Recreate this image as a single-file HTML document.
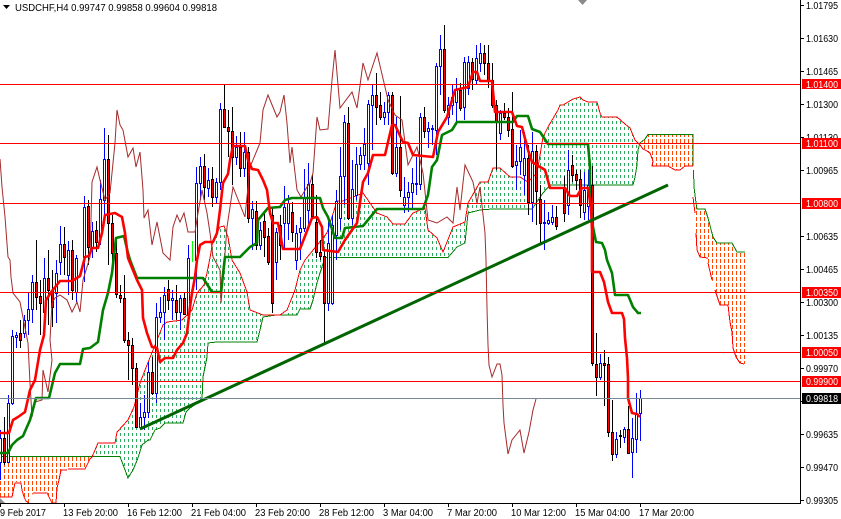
<!DOCTYPE html>
<html><head><meta charset="utf-8"><style>
html,body{margin:0;padding:0;background:#fff}
body{width:841px;height:519px;overflow:hidden;position:relative}
svg{display:block;position:absolute;left:0;top:0}
text{font-family:"Liberation Sans",sans-serif;font-size:10px;fill:#000}
</style></head><body>
<svg width="841" height="519" viewBox="0 0 841 519" xmlns="http://www.w3.org/2000/svg">
<defs>
<pattern id="g" width="4" height="6" patternUnits="userSpaceOnUse"><rect x="0" y="1" width="1" height="3" fill="#2eaa63"/></pattern>
<pattern id="o" width="4" height="6" patternUnits="userSpaceOnUse"><rect x="0" y="1" width="1" height="4" fill="#ff4500"/></pattern>
</defs>
<g>
<path fill="url(#o)" d="M0 457H92L90 459 85 469H62L59 480 57 488 56 503H52L48 495 47 493H33L29 503 26 501 24 497 22 490 21 482H15L14 483 13 492 12 497H0Z"/>
<path fill="url(#g)" d="M92 457 98 443H115L117 432 128 420 134 407 140 383 147 365 157 340 163 325 167 322 182 320 187 315 192 310 197 293 204 285 207 273 210 258 213 240 220 227 224 226 228 237 232 260 240 273 247 292 250 310 263 315H287L295 290 300 270 305 260 327 233 337 201H343L363 193 377 213 387 217 393 224H405L413 213 425 208 428 230 437 238 443 252 453 227 465 222 468 203 480 182H488L493 168H500L510 177H520L528 182 537 173 543 137 548 127 558 110 560 105H563L573 99 580 97 583 100 588 102H597L600 113 602 117H617L625 124 630 128 635 140 640 143 638 150 637 165 635 177 633 185H560L550 185 543 193 532 209H492L480 210 468 213 465 243 457 247 448 256H325L322 267 320 273 317 283 313 300 310 309H300L297 315H263L260 330 257 342H208L207 357 203 377 202 400 190 408 186 412 183 423H165L160 428 155 430 150 440 142 445 138 458 133 470 128 478 120 457Z"/>
<path fill="url(#o)" d="M640 143 648 134H693V166L694 187 696 203 697 209H705L708 218 713 237 717 243H732L737 252H745V364L740 363 736 357 733 348 732 332 730 322 728 307H720L715 290 712 280 708 263V258H700L697 250 696 233 695 213 693 197 693 166H685L680 170H675L668 166H652L650 153 647 151 643 149Z"/>
</g>
<!-- cloud edge lines -->
<g fill="none" stroke-width="1" shape-rendering="crispEdges">
<path stroke="#008000" d="M0 456.5H92M92 456.5H120L128 478 133 470 138 458 142 445 148 440H150L155 430 160 428 165 423H183L186 412 190 408 202 400 203 377 207 357 208 343 217 342H257L260 330 263 317 276 315H297L300 309H310L313 300 317 283 320 273 322 267 325 257.5H448L457 247 465 243 468 213 480 210 492 209H532L543 193 550 185H617M617 185H633L635 177 637 165 638 150 640 143 645 139 648 134.5H693V166M693.5 170 694 187 696 203 697 209H705L708 218 713 237 717 243H732L737 252H745"/>
<path stroke="#f00" d="M0 497H12L13 492 15 483H21L22 490 24 497 26 501 29 503M33 493H47L48 495 52 503H56L57 488 59 480 61 470H67M68 469H85L90 459 92 457 98 443H115L117 432 128 420 134 407 140 383 147 365 157 340 163 325 167 322 182 320 187 315 192 310 197 293 204 285 207 273 210 258 213 240 220 227 224 226 228 237 232 260 240 273 247 292 250 310 263 315H280L287 310 295 290 300 270 305 260 327 233 337 201H343L363 193 377 213 387 217 393 224H405L413 213 425 208 428 230 437 238 443 252 453 227 465 222 468 203 480 182H488L493 168H500L510 177H520L528 182 537 173 543 137 548 127 558 110 560 105H563L573 99 580 97 583 100 588 102H597L600 113 602 117H617L625 124 630 128 635 140 640 145 643 149 647 151 650 153 653 161 652 166H668L675 170H680L685 166H693M693 197 695 213M696 233 697 250 700 257 708 258M708 263 712 280M715 290 720 305H728L730 322 732 332 733 348 736 357 740 363 744 364"/>
</g>
<!-- wicks -->
<g fill="none" shape-rendering="crispEdges">
<path stroke="#0000ff" d="M.5 430V480M8.5 395V463M12.5 330V405M16.5 332V348M24.5 315V338M28.5 293V335M32.5 275V323M44.5 258V325M56.5 260V323M60.5 226V275M68.5 241V295M76.5 255V302M84.5 196V282M92.5 222V258M100.5 180V245M104.5 128V215M140.5 403V428M144.5 395V430M148.5 362V418M156.5 303V403M160.5 297V323M164.5 287V340M172.5 290V320M180.5 295V330M188.5 245V318M196.5 167V290M200.5 157V200M208.5 168V197M216.5 178V203M220.5 103V190M236.5 136V165M244.5 132V177M252.5 201V250M260.5 222V250M276.5 228V280M284.5 186V250M288.5 195V240M296.5 225V270M300.5 217V260M304.5 169V232M308.5 163V225M328.5 217V311M332.5 215V305M336.5 190V260M340.5 147V230M344.5 115V205M352.5 160V225M356.5 147V200M360.5 147V170M364.5 128V170M368.5 100V185M372.5 85V150M384.5 102V125M388.5 92V125M396.5 117V177M404.5 177V213M408.5 182V212M412.5 168V210M416.5 157V195M420.5 113V190M428.5 122V148M432.5 125V145M436.5 63V155M440.5 35V95M448.5 97V125M452.5 85V115M456.5 78V122M464.5 57V120M468.5 56V95M476.5 45V85M480.5 43V72M500.5 110V140M516.5 145V190M520.5 130V175M524.5 132V195M532.5 132V222M544.5 200V250M548.5 212V225M552.5 205V225M568.5 150V215M584.5 172V220M588.5 170V220M600.5 354V380M616.5 432V458M624.5 427V443M632.5 418V478M636.5 393V453M640.5 390V441"/>
<path stroke="#000" d="M4.5 417V465M20.5 320V348M36.5 240V310M40.5 280V335M48.5 250V325M52.5 270V327M64.5 227V275M72.5 240V300M88.5 200V265M96.5 221V252M108.5 135V265M112.5 215V270M116.5 240V298M120.5 285V303M124.5 275V343M128.5 332V380M132.5 338V385M136.5 363V428M152.5 357V395M168.5 280V310M176.5 285V320M184.5 293V315M204.5 154V200M212.5 167V207M224.5 85V128M228.5 110V157M232.5 107V185M240.5 132V177M248.5 147V223M256.5 201V250M264.5 213V257M268.5 228V265M272.5 207V313M280.5 215V260M292.5 202V242M312.5 174V218M316.5 195V258M320.5 240V260M324.5 250V343M348.5 107V220M376.5 73V125M380.5 92V120M392.5 92V175M400.5 96V197M424.5 107V138M444.5 25V113M460.5 83V111M472.5 58V90M484.5 45V75M488.5 45V88M492.5 63V108M496.5 100V170M504.5 103V120M508.5 108V137M512.5 92V168M528.5 145V215M536.5 145V225M540.5 185V243M556.5 206V230M564.5 176V222M572.5 155V182M576.5 170V190M580.5 170V218M592.5 166V366M596.5 333V396M604.5 350V406M608.5 357V437M612.5 400V461M620.5 430V448M628.5 406V453"/>
<path stroke="#00ff00" d="M192.5 241V262"/>
</g>
<!-- bodies -->
<g shape-rendering="crispEdges">
<path fill="#fff" stroke="#0000ff" d="M-.5 438.5h2V462.5h-2zM7.5 403.5h2V462.5h-2zM11.5 336.5h2V403.5h-2zM15.5 335.5h2V337.5h-2zM23.5 320.5h2V333.5h-2zM27.5 309.5h2V320.5h-2zM31.5 282.5h2V309.5h-2zM43.5 278.5h2V312.5h-2zM55.5 273.5h2V293.5h-2zM59.5 244.5h2V262.5h-2zM67.5 250.5h2V275.5h-2zM75.5 258.5h2V292.5h-2zM83.5 207.5h2V257.5h-2zM91.5 231.5h2V247.5h-2zM99.5 199.5h2V237.5h-2zM103.5 159.5h2V200.5h-2zM139.5 417.5h2V427.5h-2zM143.5 412.5h2V417.5h-2zM147.5 372.5h2V412.5h-2zM155.5 317.5h2V393.5h-2zM159.5 312.5h2V317.5h-2zM163.5 295.5h2V312.5h-2zM171.5 298.5h2V300.5h-2zM179.5 298.5h2V312.5h-2zM187.5 258.5h2V315.5h-2zM195.5 183.5h2V260.5h-2zM199.5 166.5h2V183.5h-2zM207.5 180.5h2V188.5h-2zM215.5 182.5h2V197.5h-2zM219.5 109.5h2V182.5h-2zM235.5 147.5h2V157.5h-2zM243.5 152.5h2V168.5h-2zM251.5 209.5h2V218.5h-2zM259.5 230.5h2V245.5h-2zM275.5 232.5h2V262.5h-2zM283.5 207.5h2V223.5h-2zM287.5 203.5h2V223.5h-2zM295.5 233.5h2V260.5h-2zM299.5 228.5h2V232.5h-2zM303.5 198.5h2V228.5h-2zM307.5 184.5h2V210.5h-2zM327.5 243.5h2V303.5h-2zM331.5 225.5h2V303.5h-2zM335.5 201.5h2V235.5h-2zM339.5 176.5h2V218.5h-2zM343.5 122.5h2V176.5h-2zM351.5 189.5h2V218.5h-2zM355.5 164.5h2V195.5h-2zM359.5 155.5h2V164.5h-2zM363.5 144.5h2V155.5h-2zM367.5 104.5h2V163.5h-2zM371.5 95.5h2V105.5h-2zM383.5 112.5h2V117.5h-2zM387.5 95.5h2V112.5h-2zM395.5 147.5h2V173.5h-2zM403.5 197.5h2V205.5h-2zM407.5 192.5h2V197.5h-2zM411.5 183.5h2V192.5h-2zM415.5 183.5h2V184.5h-2zM419.5 117.5h2V184.5h-2zM427.5 128.5h2V131.5h-2zM431.5 128.5h2V129.5h-2zM435.5 66.5h2V130.5h-2zM439.5 49.5h2V66.5h-2zM447.5 105.5h2V117.5h-2zM451.5 97.5h2V105.5h-2zM455.5 90.5h2V102.5h-2zM463.5 62.5h2V107.5h-2zM467.5 62.5h2V88.5h-2zM475.5 58.5h2V80.5h-2zM479.5 53.5h2V63.5h-2zM499.5 113.5h2V133.5h-2zM515.5 161.5h2V165.5h-2zM519.5 147.5h2V161.5h-2zM523.5 158.5h2V175.5h-2zM531.5 151.5h2V202.5h-2zM543.5 222.5h2V223.5h-2zM547.5 220.5h2V223.5h-2zM551.5 217.5h2V222.5h-2zM567.5 170.5h2V205.5h-2zM583.5 190.5h2V212.5h-2zM587.5 185.5h2V206.5h-2zM599.5 363.5h2V377.5h-2zM615.5 439.5h2V454.5h-2zM623.5 429.5h2V437.5h-2zM631.5 438.5h2V452.5h-2zM635.5 413.5h2V439.5h-2zM639.5 398.5h2V413.5h-2z"/>
<path fill="#f00" stroke="#000" d="M3.5 438.5h2V462.5h-2zM19.5 333.5h2V340.5h-2zM35.5 282.5h2V297.5h-2zM39.5 296.5h2V303.5h-2zM47.5 278.5h2V290.5h-2zM51.5 290.5h2V307.5h-2zM63.5 244.5h2V257.5h-2zM71.5 250.5h2V290.5h-2zM87.5 206.5h2V247.5h-2zM95.5 230.5h2V242.5h-2zM107.5 159.5h2V223.5h-2zM111.5 223.5h2V253.5h-2zM115.5 253.5h2V294.5h-2zM119.5 295.5h2V298.5h-2zM123.5 298.5h2V340.5h-2zM127.5 340.5h2V345.5h-2zM131.5 345.5h2V368.5h-2zM135.5 368.5h2V427.5h-2zM151.5 372.5h2V393.5h-2zM167.5 289.5h2V300.5h-2zM175.5 300.5h2V312.5h-2zM183.5 298.5h2V314.5h-2zM203.5 166.5h2V187.5h-2zM211.5 179.5h2V197.5h-2zM223.5 109.5h2V127.5h-2zM227.5 127.5h2V131.5h-2zM231.5 131.5h2V157.5h-2zM239.5 147.5h2V168.5h-2zM247.5 152.5h2V218.5h-2zM255.5 211.5h2V245.5h-2zM263.5 221.5h2V237.5h-2zM267.5 236.5h2V262.5h-2zM271.5 215.5h2V303.5h-2zM279.5 225.5h2V245.5h-2zM291.5 212.5h2V232.5h-2zM311.5 184.5h2V216.5h-2zM315.5 222.5h2V252.5h-2zM319.5 252.5h2V256.5h-2zM323.5 256.5h2V303.5h-2zM347.5 123.5h2V218.5h-2zM375.5 95.5h2V107.5h-2zM379.5 105.5h2V117.5h-2zM391.5 95.5h2V173.5h-2zM399.5 147.5h2V190.5h-2zM423.5 117.5h2V131.5h-2zM443.5 49.5h2V110.5h-2zM459.5 90.5h2V108.5h-2zM471.5 62.5h2V79.5h-2zM483.5 53.5h2V63.5h-2zM487.5 63.5h2V80.5h-2zM491.5 80.5h2V105.5h-2zM495.5 105.5h2V121.5h-2zM503.5 113.5h2V117.5h-2zM507.5 117.5h2V130.5h-2zM511.5 129.5h2V166.5h-2zM527.5 158.5h2V202.5h-2zM535.5 151.5h2V191.5h-2zM539.5 199.5h2V223.5h-2zM555.5 217.5h2V226.5h-2zM563.5 187.5h2V213.5h-2zM571.5 165.5h2V175.5h-2zM575.5 174.5h2V180.5h-2zM579.5 179.5h2V205.5h-2zM591.5 185.5h2V363.5h-2zM595.5 364.5h2V377.5h-2zM603.5 363.5h2V365.5h-2zM607.5 364.5h2V432.5h-2zM611.5 432.5h2V454.5h-2zM619.5 435.5h2V436.5h-2zM627.5 429.5h2V453.5h-2z"/>
</g>
<!-- chikou -->
<path fill="none" stroke="#a52a2a" stroke-width="1" d="M0 159 2 187 5 217 8 257 10 260 11 277 13 293 20 302 28 343 30 383 32 417 35 402 42 400 43 370 48 392 52 360 50 340 52 303 55 298 60 295 67 300 72 312 77 302 80 312 83 280 90 257 92 182 97 167 100 180 105 200 110 193 115 143 117 110 120 125 123 130 128 157 133 148 136 167 140 152 143 190 144 218 148 210 152 245 157 222 163 253 170 260 173 227 177 215 180 222 184 213 188 232H195L198 213 202 190 207 213 210 233 213 257 220 270 221 303 223 280 227 227 233 187 245 217 250 167 260 143 263 110 268 95 277 117 280 112 284 95 287 123 290 163 292 147 297 190 301 197 307 187 310 183 313 173 317 117 320 130 328 129 332 80 335 50 340 108 352 92 357 108 363 63 368 80 377 53 385 87 388 100 395 115 402 120 408 165 417 147 423 173 428 220 437 223 447 217 453 223 457 187 460 210 465 165 473 182 477 203 480 187 485 233 486 260 487 308 488 345 489 365 492 377 497 364H500L502 375 503 405 504 423 508 454 512 440 520 430 524 453 529 432 533 410 536 399"/>
<!-- kijun -->
<path fill="none" stroke="#008000" stroke-width="2.6" stroke-linejoin="round" d="M0 453H8L12 445 17 440 23 436 30 420 36 398H49L55 373 60 364H80L83 349 90 348 98 342 103 310 108 293 112 273 116 238 124 236 128 253 130 260 137 278H203L212 292H221L225 257H240L250 247 257 243 258 220 268 208 280 207 285 200 292 198H320L323 208 328 217 335 238H342L345 228 363 226 377 209H423L428 195 432 167 437 160 442 135 452 130 457 122H513L517 116H528L532 129 540 132 548 144H588L590 167V200L593 227 596 242 602 243 605 250 607 260 612 273 615 295H628L633 307 638 313H641"/>
<!-- tenkan -->
<path fill="none" stroke="#f00" stroke-width="2.6" stroke-linejoin="round" d="M0 433H9L13 420 18 417 25 412 30 390 35 380 40 350 44 335 46 300 52 291 60 281H72L80 276 85 257 89 256 92 248H98L102 233 105 215 115 213 122 217 125 233 128 258 137 280 142 290 143 318 147 333 152 347 157 348 160 362 165 358H173L177 350 183 343 187 333 190 307 192 293 195 277 197 260 200 245 205 242H213L217 233 220 210 223 183 228 174 230 160 233 146H245L248 160 252 169 258 170 263 180 267 190 270 213 273 223H278L280 233 283 249H300L312 218 317 217 322 227 323 250 338 252 345 240 352 230 357 223 363 182 368 173 373 155H385L392 125H395L403 142 408 143 413 155 433 157 438 132 447 117 455 90 468 87 473 72H477L480 81H492L495 112H512L517 126 522 127 528 150 532 162 545 170 550 188H565L570 196H577L582 188H588L591 208 592 230V272H600L604 282 608 302 612 313H622L624 319 625 338 627 358 628 378V398L632 413 637 414 640 417"/>
<!-- trendline -->
<line x1="140" y1="429" x2="668" y2="185" stroke="#006400" stroke-width="3"/>
<!-- levels -->
<g stroke-width="1" shape-rendering="crispEdges">
<path stroke="#778899" d="M0 398.5H800"/>
<path stroke="#f00" d="M0 84.5H800M0 143.5H800M0 203.5H800M0 292.5H800M0 352.5H800M0 381.5H800"/>
</g>
<!-- markers -->
<path fill="#8a8a8a" d="M578 0H587L582.500 5Z"/>
<path fill="#8a8a8a" d="M0 498 5 503H0Z"/>
<!-- frame -->
<rect x="801" y="0" width="40" height="519" fill="#fff"/>
<rect x="0" y="504" width="841" height="15" fill="#fff"/>
<g shape-rendering="crispEdges" stroke="#000" fill="none">
<path d="M800.500 0V503.500H0"/>
<path d="M801 5.500h3M801 38.500h3M801 71.500h3M801 104.500h3M801 137.500h3M801 170.500h3M801 236.500h3M801 269.500h3M801 302.500h3M801 335.500h3M801 368.500h3M801 401.500h3M801 434.500h3M801 467.500h3M801 500.500h3"/>
<path d="M0.500 504v3M64.500 504v3M128.500 504v3M192.500 504v3M256.500 504v3M320.500 504v3M384.500 504v3M448.500 504v3M512.500 504v3M576.500 504v3M640.500 504v3"/>
</g>
<!-- title -->
<path d="M3 5H10L6.500 9Z" fill="#000"/>
<text x="15" y="11" textLength="202" lengthAdjust="spacingAndGlyphs">USDCHF,H4  0.99747 0.99858 0.99604 0.99818</text>
<!-- axis labels -->
<g>
<text x="806" y="9" textLength="32" lengthAdjust="spacingAndGlyphs">1.01795</text>
<text x="806" y="42" textLength="32" lengthAdjust="spacingAndGlyphs">1.01630</text>
<text x="806" y="75" textLength="32" lengthAdjust="spacingAndGlyphs">1.01465</text>
<text x="806" y="108" textLength="32" lengthAdjust="spacingAndGlyphs">1.01300</text>
<text x="806" y="141" textLength="32" lengthAdjust="spacingAndGlyphs">1.01130</text>
<text x="806" y="174" textLength="32" lengthAdjust="spacingAndGlyphs">1.00965</text>
<text x="806" y="240" textLength="32" lengthAdjust="spacingAndGlyphs">1.00635</text>
<text x="806" y="273" textLength="32" lengthAdjust="spacingAndGlyphs">1.00465</text>
<text x="806" y="306" textLength="32" lengthAdjust="spacingAndGlyphs">1.00300</text>
<text x="806" y="339" textLength="32" lengthAdjust="spacingAndGlyphs">1.00135</text>
<text x="806" y="372" textLength="32" lengthAdjust="spacingAndGlyphs">0.99970</text>
<text x="806" y="438" textLength="32" lengthAdjust="spacingAndGlyphs">0.99635</text>
<text x="806" y="471" textLength="32" lengthAdjust="spacingAndGlyphs">0.99470</text>
<text x="806" y="504" textLength="32" lengthAdjust="spacingAndGlyphs">0.99305</text>
</g>
<g shape-rendering="crispEdges">
<rect x="802" y="79" width="39" height="10" fill="#f00"/>
<rect x="802" y="138" width="39" height="11" fill="#f00"/>
<rect x="802" y="198" width="39" height="11" fill="#f00"/>
<rect x="802" y="287" width="39" height="11" fill="#f00"/>
<rect x="802" y="347" width="39" height="11" fill="#f00"/>
<rect x="802" y="376" width="39" height="11" fill="#f00"/>
<rect x="802" y="393" width="39" height="11" fill="#000"/>
</g>
<g>
<text x="806" y="88" textLength="32" lengthAdjust="spacingAndGlyphs" style="fill:#fff">1.01400</text>
<text x="806" y="147" textLength="32" lengthAdjust="spacingAndGlyphs" style="fill:#fff">1.01100</text>
<text x="806" y="207" textLength="32" lengthAdjust="spacingAndGlyphs" style="fill:#fff">1.00800</text>
<text x="806" y="296" textLength="32" lengthAdjust="spacingAndGlyphs" style="fill:#fff">1.00350</text>
<text x="806" y="356" textLength="32" lengthAdjust="spacingAndGlyphs" style="fill:#fff">1.00050</text>
<text x="806" y="385" textLength="32" lengthAdjust="spacingAndGlyphs" style="fill:#fff">0.99900</text>
<text x="806" y="402" textLength="32" lengthAdjust="spacingAndGlyphs" style="fill:#fff">0.99818</text>
</g>
<!-- time labels -->
<text x="0" y="516" textLength="46" lengthAdjust="spacingAndGlyphs">9 Feb 2017</text>
<text x="63" y="516" textLength="55" lengthAdjust="spacingAndGlyphs">13 Feb 20:00</text>
<text x="127" y="516" textLength="55" lengthAdjust="spacingAndGlyphs">16 Feb 12:00</text>
<text x="191" y="516" textLength="55" lengthAdjust="spacingAndGlyphs">21 Feb 04:00</text>
<text x="255" y="516" textLength="55" lengthAdjust="spacingAndGlyphs">23 Feb 20:00</text>
<text x="319" y="516" textLength="55" lengthAdjust="spacingAndGlyphs">28 Feb 12:00</text>
<text x="383" y="516" textLength="50" lengthAdjust="spacingAndGlyphs">3 Mar 04:00</text>
<text x="447" y="516" textLength="50" lengthAdjust="spacingAndGlyphs">7 Mar 20:00</text>
<text x="511" y="516" textLength="55" lengthAdjust="spacingAndGlyphs">10 Mar 12:00</text>
<text x="575" y="516" textLength="55" lengthAdjust="spacingAndGlyphs">15 Mar 04:00</text>
<text x="639" y="516" textLength="55" lengthAdjust="spacingAndGlyphs">17 Mar 20:00</text>
</svg>
</body></html>
